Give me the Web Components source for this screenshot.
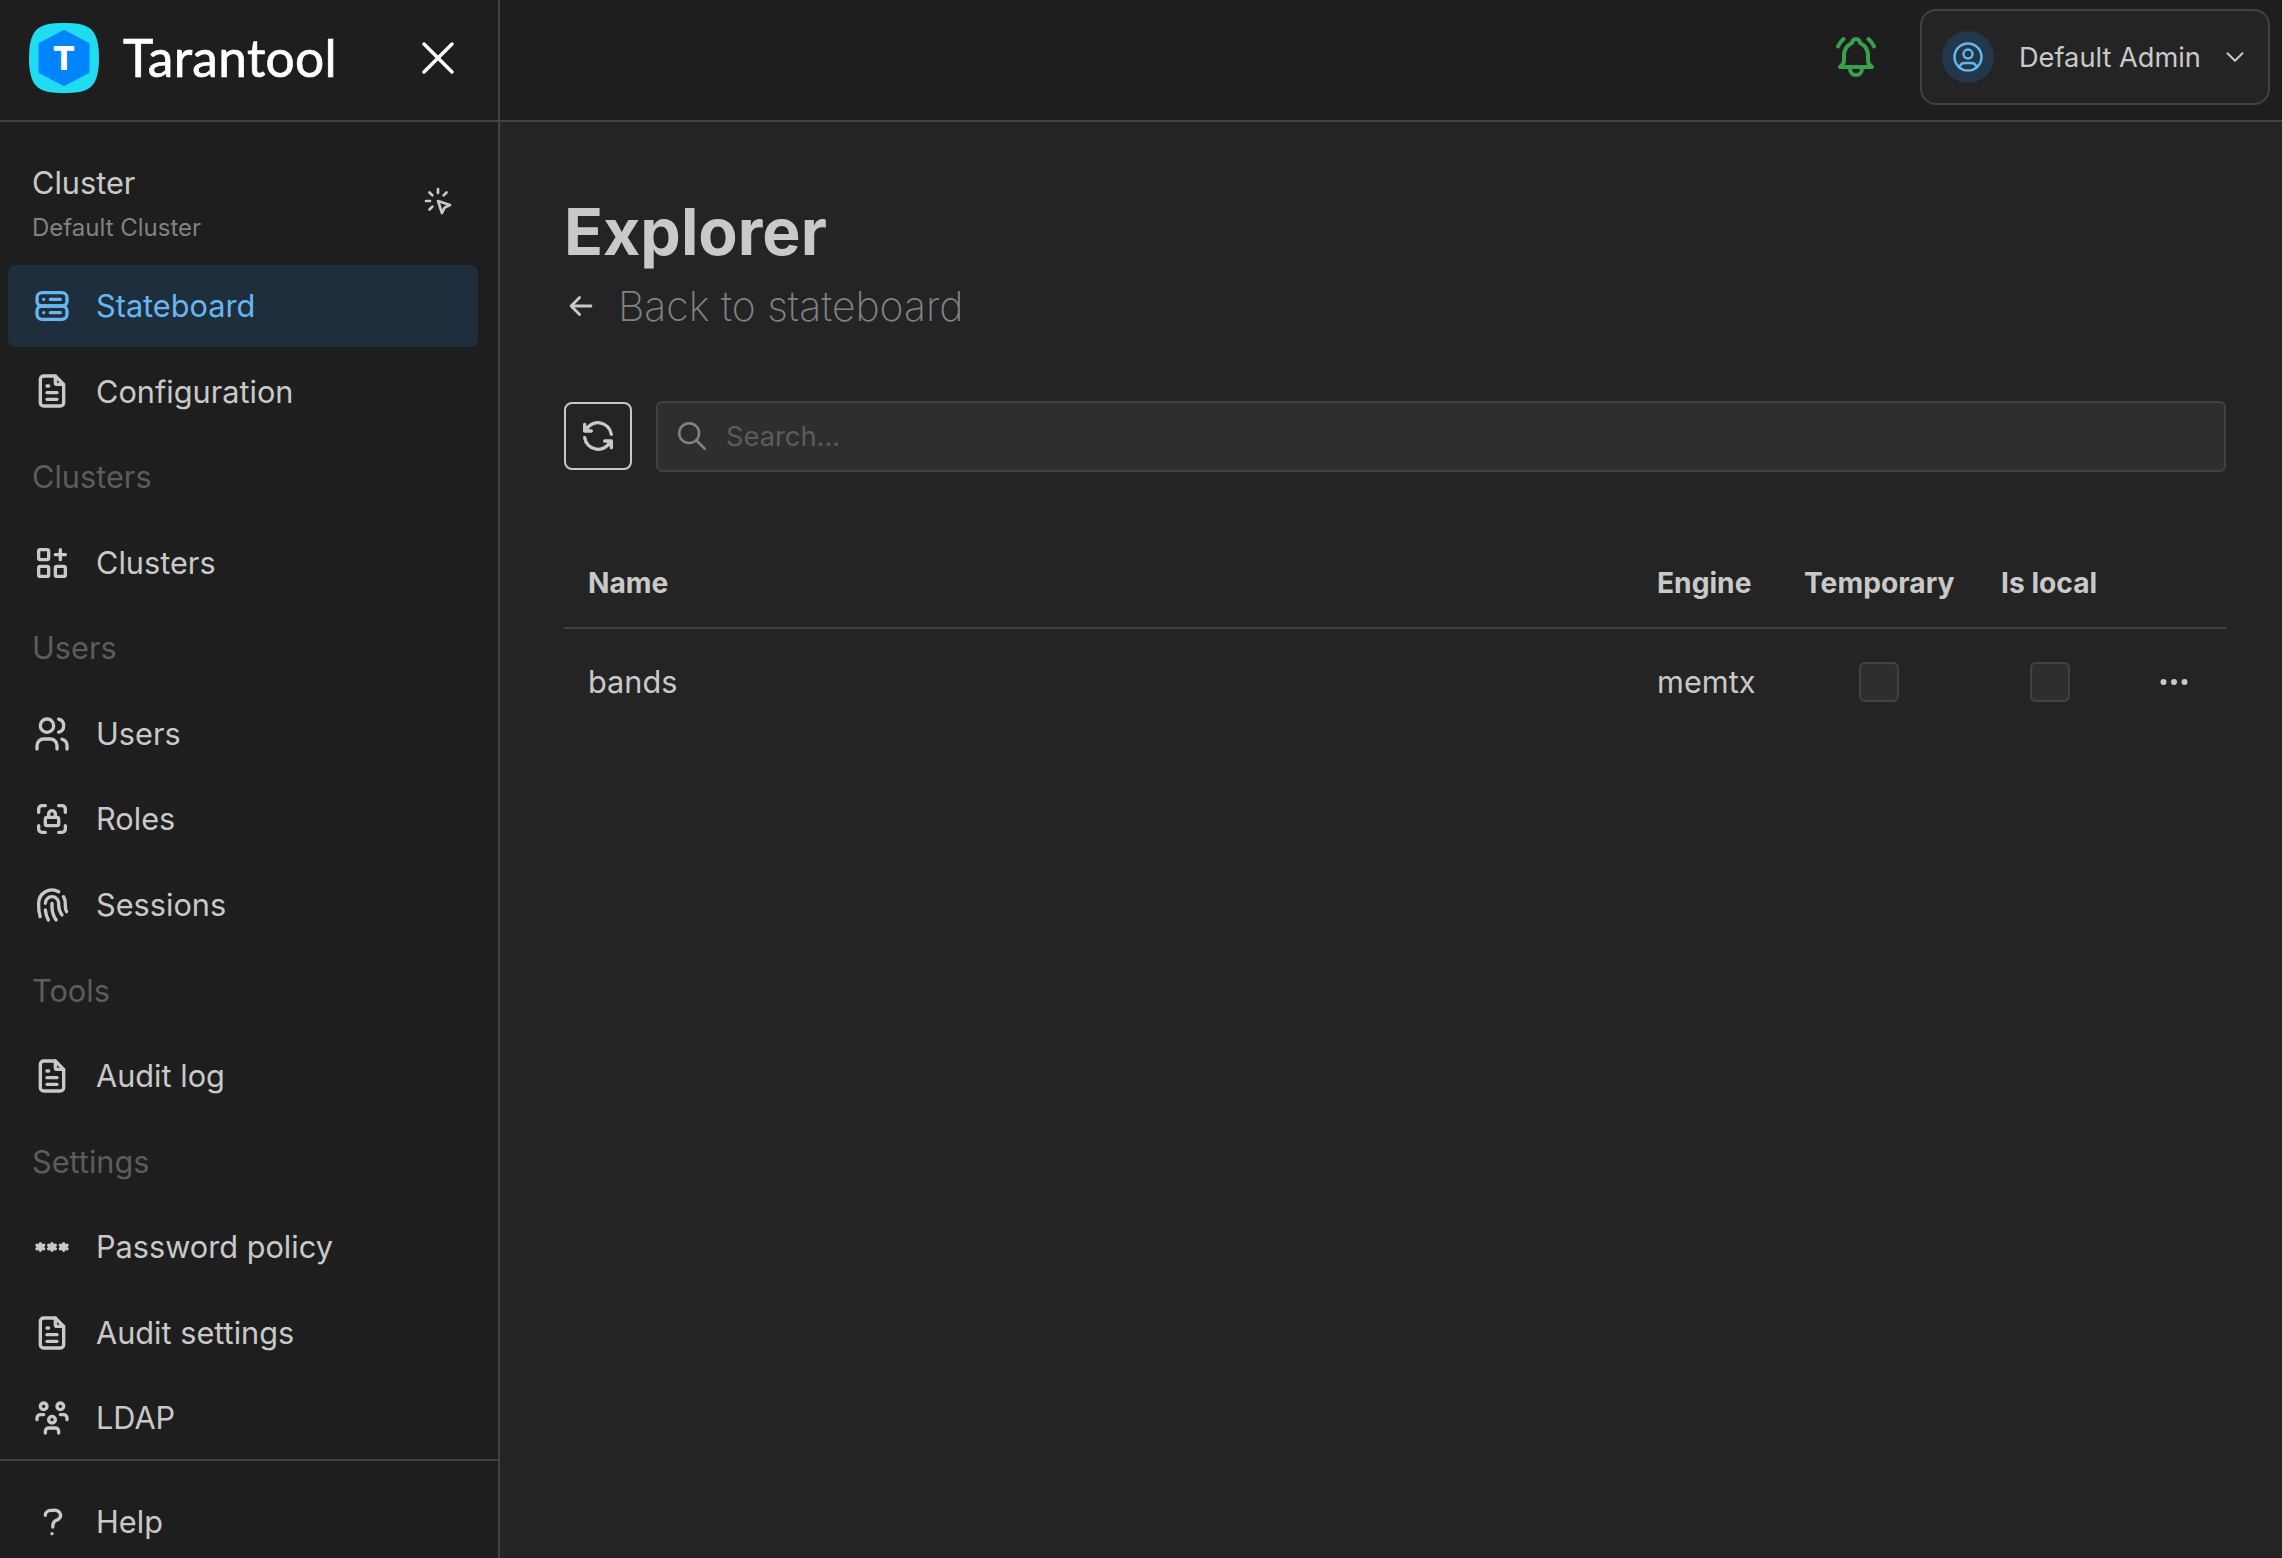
<!DOCTYPE html>
<html lang="en"><head><meta charset="utf-8"><title>Explorer</title>
<style>
html,body{margin:0;height:1558px;overflow:hidden;background:#242424;color:#c9c9c9;font-family:Inter,"Liberation Sans",sans-serif}
</style></head><body>
<app-shell>
  <side-bar slot="side">
    <nav-item icon="server" active>Stateboard</nav-item>
    <nav-item icon="file">Configuration</nav-item>
    <nav-label>Clusters</nav-label>
    <nav-item icon="apps">Clusters</nav-item>
    <nav-label>Users</nav-label>
    <nav-item icon="users">Users</nav-item>
    <nav-item icon="lock">Roles</nav-item>
    <nav-item icon="finger">Sessions</nav-item>
    <nav-label>Tools</nav-label>
    <nav-item icon="file">Audit log</nav-item>
    <nav-label>Settings</nav-label>
    <nav-item icon="password">Password policy</nav-item>
    <nav-item icon="file">Audit settings</nav-item>
    <nav-item icon="group">LDAP</nav-item>
    <nav-item slot="foot" icon="help">Help</nav-item>
  </side-bar>
  <top-bar slot="top"></top-bar>
  <explorer-page></explorer-page>
</app-shell>
<script>
const P={
server:'<rect x="3" y="4" width="18" height="8" rx="3"/><rect x="3" y="12" width="18" height="8" rx="3"/><path d="M7 8v.01M7 16v.01M11 8h6M11 16h6"/>',
file:'<path d="M14 3v4a1 1 0 0 0 1 1h4"/><path d="M17 21H7a2 2 0 0 1-2-2V5a2 2 0 0 1 2-2h7l5 5v11a2 2 0 0 1-2 2z"/><path d="M9 9h1M9 13h6M9 17h6"/>',
apps:'<rect x="4" y="4" width="6" height="6" rx="1"/><rect x="4" y="14" width="6" height="6" rx="1"/><rect x="14" y="14" width="6" height="6" rx="1"/><path d="M14 7h6M17 4v6"/>',
users:'<circle cx="9" cy="7" r="4"/><path d="M3 21v-2a4 4 0 0 1 4-4h4a4 4 0 0 1 4 4v2M16 3.13a4 4 0 0 1 0 7.75M21 21v-2a4 4 0 0 0-3-3.85"/>',
lock:'<path d="M4 8V6a2 2 0 0 1 2-2h2M4 16v2a2 2 0 0 0 2 2h2M16 4h2a2 2 0 0 1 2 2v2M16 20h2a2 2 0 0 0 2-2v-2"/><rect x="8" y="11" width="8" height="5" rx="1"/><path d="M10 11V9a2 2 0 1 1 4 0v2"/>',
finger:'<path d="M18.9 7a8 8 0 0 1 1.1 5v1a6 6 0 0 0 .8 3M8 11a4 4 0 0 1 8 0v1a10 10 0 0 0 2 6M12 11v2a14 14 0 0 0 2.5 8M8 15a18 18 0 0 0 1.8 6M4.9 19a22 22 0 0 1-.9-7v-1a8 8 0 0 1 12-6.95"/>',
password:'<path d="M12 10v4M10 13l4-2M10 11l4 2M5 10v4M3 13l4-2M3 11l4 2M19 10v4M17 13l4-2M17 11l4 2"/>',
group:'<path d="M10 13a2 2 0 1 0 4 0a2 2 0 0 0-4 0M8 21v-1a2 2 0 0 1 2-2h4a2 2 0 0 1 2 2v1M15 5a2 2 0 1 0 4 0a2 2 0 0 0-4 0M17 10h2a2 2 0 0 1 2 2v1M5 5a2 2 0 1 0 4 0a2 2 0 0 0-4 0M3 13v-1a2 2 0 0 1 2-2h2"/>',
help:'<path d="M8 8a3.5 3 0 0 1 3.5-3h1a3.5 3 0 0 1 2 6a3 4 0 0 0-2 4M12 19v.01"/>',
x:'<path d="M18 6L6 18M6 6l12 12"/>',
click:'<path d="M3 12h3M12 3v3M7.8 7.8L5.6 5.6M16.2 7.8l2.2-2.2M7.8 16.2l-2.2 2.2M12 12l9 3l-4 2l-2 4l-3-9"/>',
bell:'<path d="M10 5a2 2 0 0 1 4 0a7 7 0 0 1 4 6v3a4 4 0 0 0 2 3H4a4 4 0 0 0 2-3v-3a7 7 0 0 1 4-6M9 17v1a3 3 0 0 0 6 0v-1M21 6.727a11.05 11.05 0 0 0-2.794-3.727M3 6.727a11.05 11.05 0 0 1 2.792-3.727"/>',
user:'<circle cx="12" cy="12" r="9"/><circle cx="12" cy="10" r="3"/><path d="M6.168 18.849A4 4 0 0 1 10 16h4a4 4 0 0 1 3.834 2.855"/>',
chevron:'<path d="M6 9l6 6l6-6"/>',
arrow:'<path d="M5 12h14M5 12l6 6M5 12l6-6"/>',
refresh:'<path d="M20 11a8.1 8.1 0 0 0-15.5-2m-.5-4v4h4M4 13a8.1 8.1 0 0 0 15.5 2m.5 4v-4h-4"/>',
search:'<circle cx="10" cy="10" r="7"/><path d="M21 21l-6-6"/>',
dots:'<circle cx="5" cy="12" r="1"/><circle cx="12" cy="12" r="1"/><circle cx="19" cy="12" r="1"/>'
};
function def(name,html,init){customElements.define(name,class extends HTMLElement{
  connectedCallback(){if(this.shadowRoot)return;const r=this.attachShadow({mode:'open'});r.innerHTML=typeof html==='function'?html(this):html;if(init)init(this,r);}
});}
def('t-icon',h=>`<style>:host{display:inline-flex;flex:none;width:var(--s,40px);height:var(--s,40px)}svg{display:block;width:100%;height:100%;fill:none;stroke:currentColor;stroke-width:var(--w,2);stroke-linecap:round;stroke-linejoin:round}</style><svg viewBox="0 0 24 24">${P[h.getAttribute('name')]||''}</svg>`);
def('app-shell',`<style>
:host{display:grid;grid-template-columns:500px 1fr;grid-template-rows:122px 1fr;height:1558px;width:2282px;overflow:hidden}
.s{grid-row:1/3;grid-column:1}.t{grid-column:2}.m{grid-column:2;min-width:0}
</style><div class="s"><slot name="side"></slot></div><div class="t"><slot name="top"></slot></div><div class="m"><slot></slot></div>`);
def('brand-logo',`<style>:host{display:inline-flex;align-items:center;gap:24px}svg{display:block;width:70px;height:70px}
span{font:400 51.500px/1 Lato,Inter,sans-serif;color:#fff;letter-spacing:.3px;-webkit-text-stroke:.7px #fff}
text{font:800 33px Inter,sans-serif;fill:#fff}</style>
<svg viewBox="0 0 70 70"><path d="M35 0C58 0 70 3 70 35S58 70 35 70S0 67 0 35S12 0 35 0Z" fill="#1fdcf0"/><path d="M35 8L59.500 21V49L35 62L10.500 49V21Z" fill="#0084ff" stroke="#0084ff" stroke-width="2" stroke-linejoin="round"/><text x="35" y="47" text-anchor="middle">T</text></svg><span>Tarantool</span>`);
def('side-bar',`<style>
:host{display:flex;flex-direction:column;box-sizing:border-box;height:1558px;width:500px;background:#1e1e1e;border-right:2px solid #424242}
.b{flex:none;height:122px;box-sizing:border-box;border-bottom:2px solid #424242;display:flex;align-items:center;justify-content:space-between;padding:0 32px 5px 29px;color:#fff}
.c{flex:none;height:143px;box-sizing:border-box;padding:20px 41px 0 32px;display:flex;align-items:center;justify-content:space-between}
.c b{display:block;font:400 30.700px/44px Inter,sans-serif;color:#c9c9c9}
.c small{display:block;font:400 24px/36px Inter,sans-serif;color:#828282;margin-top:5px}
.c t-icon{--s:32px;color:#c9c9c9;margin:-6px 3px 0 0}
.n{flex:1;display:flex;flex-direction:column;gap:4px;padding:0 20px 0 8px;min-height:0}
.f{flex:none;border-top:2px solid #424242;padding:20px 20px 0 8px;height:99px;box-sizing:border-box}
.b t-icon{--s:56px;--w:1.5}
</style><div class="b"><brand-logo></brand-logo><t-icon name="x"></t-icon></div>
<div class="c"><div><b>Cluster</b><small>Default Cluster</small></div><t-icon name="click"></t-icon></div>
<div class="n"><slot></slot></div><div class="f"><slot name="foot"></slot></div>`);
def('nav-item',h=>`<style>
:host{display:flex;align-items:center;height:81.730px;box-sizing:border-box;padding-left:24px;gap:24px;border-radius:8px;color:#c9c9c9;font:400 30.700px/1 Inter,sans-serif}
:host([active]){background:#1f2e3c;color:#66b7f1}
span{padding-top:1px}
</style><t-icon name="${h.getAttribute('icon')}"></t-icon><span><slot></slot></span>`);
def('nav-label',`<style>:host{display:flex;align-items:center;box-sizing:border-box;height:81.730px;padding:1px 0 0 24px;color:#5c5c5c;font:400 30.700px/1 Inter,sans-serif}</style><slot></slot>`);
def('top-bar',`<style>
:host{display:flex;align-items:center;justify-content:flex-end;height:122px;box-sizing:border-box;background:#1e1e1e;border-bottom:2px solid #424242;padding:0 12px 6px 0;gap:40px}
t-icon.bell{--s:48px;color:#37a24d}
</style><t-icon class="bell" name="bell"></t-icon><user-menu>Default Admin</user-menu>`);
def('user-menu',`<style>
:host{display:flex;align-items:center;box-sizing:border-box;width:350px;height:96px;border:2px solid #424242;border-radius:16px;background:#242424;padding:0 18px 0 20px;color:#c9c9c9;font:400 27.200px/1 Inter,sans-serif}
.a{width:52px;height:52px;border-radius:50%;background:#22384a;color:#66b7f1;display:flex;align-items:center;justify-content:center;flex:none;margin-right:25px}
.a t-icon{--s:36px;--w:1.6}
span{flex:1;padding-top:1px}
.c{--s:30px;--w:1.6;color:#c9c9c9}
</style><div class="a"><t-icon name="user"></t-icon></div><span><slot></slot></span><t-icon class="c" name="chevron"></t-icon>`);
def('explorer-page',`<style>
:host{display:block;box-sizing:border-box;padding:70px 56px 0 64px;background:#242424;height:1436px}
h1{margin:0;font:700 64.300px/80px Inter,sans-serif;color:#c9c9c9}
.back{display:flex;align-items:center;gap:20px;font:200 40.900px/56px Inter,sans-serif;color:#828282;margin-top:6px}
.back t-icon{--s:34px;color:#c9c9c9}
.tools{display:flex;align-items:center;gap:24px;margin-top:66.500px}
.tools button{all:unset;box-sizing:border-box;width:68px;height:68px;border:2px solid #c9c9c9;border-radius:8px;display:flex;align-items:center;justify-content:center;color:#c9c9c9}
.tools button t-icon{--s:40px}
.search{flex:1;box-sizing:border-box;height:71px;background:#2e2e2e;border:2px solid #424242;border-radius:6px;display:flex;align-items:center;gap:17px;padding:0 17px;color:#828282;font:400 27.300px/1 Inter,sans-serif}
.search span{color:#5c5c5c;padding-top:1px}
.search t-icon{--s:34px;--w:1.8}
data-table{margin-top:69.500px}
</style><h1>Explorer</h1><div class="back"><t-icon name="arrow"></t-icon><span>Back to stateboard</span></div>
<div class="tools"><button aria-label="Refresh"><t-icon name="refresh"></t-icon></button><div class="search"><t-icon name="search"></t-icon><span>Search...</span></div></div>
<data-table></data-table>`);
def('data-table',`<style>
:host{display:block;font:400 30.700px/1 Inter,sans-serif;color:#c9c9c9}
.r{display:grid;grid-template-columns:1fr 147px 197px 146px 103px;align-items:center}
.h{height:86px;border-bottom:2px solid #424242;font-weight:700;font-size:28.200px}
.h>*{padding-bottom:2px}
.d{height:105px}
.r>*{padding-left:24px}
.d>div:not(.ck){padding-top:2px}
.ck{padding:0;justify-self:center;box-sizing:border-box;width:40px;height:40px;background:#2e2e2e;border:2px solid #424242;border-radius:6px}
.dots{padding:0;justify-self:center;--s:36px;--w:2;color:#c9c9c9;margin-right:2px}
</style>
<div class="r h"><div>Name</div><div>Engine</div><div>Temporary</div><div>Is local</div><div></div></div>
<div class="r d"><div>bands</div><div>memtx</div><div class="ck"></div><div class="ck"></div><t-icon class="dots" name="dots"></t-icon></div>`);
</script>
</body></html>
